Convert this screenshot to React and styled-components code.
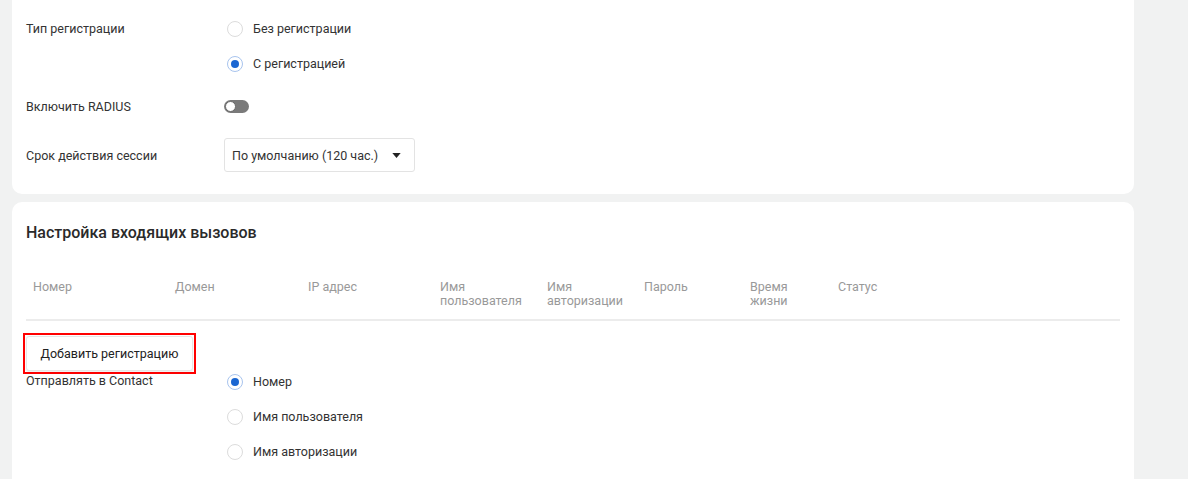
import React, { useState } from "react";
import styled, { createGlobalStyle } from "styled-components";

const GlobalStyle = createGlobalStyle`
  html, body {
    margin: 0;
    padding: 0;
    background: #f1f2f2;
    font-family: Roboto, "Noto Sans", Arial, sans-serif;
    color: #333;
    overflow: hidden;
  }
`;

const columns = [
  { title: "Номер", width: 142 },
  { title: "Домен", width: 133 },
  { title: "IP адрес", width: 132 },
  { title: ["Имя", "пользователя"], width: 107 },
  { title: ["Имя", "авторизации"], width: 97 },
  { title: "Пароль", width: 106 },
  { title: ["Время", "жизни"], width: 88 },
  { title: "Статус", width: null },
];

function Radio({ checked, label, onClick }) {
  return (
    <RadioItem onClick={onClick}>
      <RadioCircle $checked={checked} />
      <span>{label}</span>
    </RadioItem>
  );
}

function App() {
  const [regType, setRegType] = useState("with");
  const [contact, setContact] = useState("number");
  const [radius, setRadius] = useState(false);

  return (
    <Page>
      <GlobalStyle />
      <TopCard>
        <FieldRow>
          <Label $lh={35}>Тип регистрации</Label>
          <RadioGroup>
            <Radio
              label="Без регистрации"
              checked={regType === "without"}
              onClick={() => setRegType("without")}
            />
            <Radio
              label="С регистрацией"
              checked={regType === "with"}
              onClick={() => setRegType("with")}
            />
          </RadioGroup>
        </FieldRow>
        <FieldRow $center $mt={8} $h={35}>
          <Label>Включить RADIUS</Label>
          <Toggle $on={radius} onClick={() => setRadius(!radius)}>
            <Thumb $on={radius} />
          </Toggle>
        </FieldRow>
        <FieldRow $center $mt={14} $h={34}>
          <Label>Срок действия сессии</Label>
          <Select>
            <span>По умолчанию (120 час.)</span>
            <svg width="9" height="5" viewBox="0 0 10 6">
              <path d="M0 0 L10 0 L5 6 Z" fill="#222" />
            </svg>
          </Select>
        </FieldRow>
      </TopCard>

      <Card>
        <Title>Настройка входящих вызовов</Title>
        <Table>
          <HeaderRow>
            {columns.map((c, i) => (
              <HeaderCell key={i} $w={c.width}>
                {Array.isArray(c.title) ? (
                  <>
                    {c.title[0]}
                    <br />
                    {c.title[1]}
                  </>
                ) : (
                  c.title
                )}
              </HeaderCell>
            ))}
          </HeaderRow>
        </Table>

        <FieldRow>
          <LabelColumn>
            <Highlight>
              <Button>Добавить регистрацию</Button>
            </Highlight>
            <Label $lh={14}>Отправлять в Contact</Label>
          </LabelColumn>
          <RadioGroup $pt={43}>
            <Radio
              label="Номер"
              checked={contact === "number"}
              onClick={() => setContact("number")}
            />
            <Radio
              label="Имя пользователя"
              checked={contact === "user"}
              onClick={() => setContact("user")}
            />
            <Radio
              label="Имя авторизации"
              checked={contact === "auth"}
              onClick={() => setContact("auth")}
            />
          </RadioGroup>
        </FieldRow>
      </Card>
    </Page>
  );
}

const Page = styled.div`
  width: 1122px;
  padding-left: 12px;
  display: flex;
  flex-direction: column;
  gap: 8px;
`;

const Card = styled.div`
  background: #fff;
  border-radius: 10px;
  padding: 20px 14px 60px;
`;

const TopCard = styled(Card)`
  border-radius: 0 0 10px 10px;
  padding: 11px 14px 22px;
`;

const FieldRow = styled.div`
  display: flex;
  align-items: ${(p) => (p.$center ? "center" : "flex-start")};
  margin-top: ${(p) => p.$mt || 0}px;
  height: ${(p) => (p.$h ? `${p.$h}px` : "auto")};
`;

const LabelColumn = styled.div`
  width: 198px;
  flex-shrink: 0;
  display: flex;
  flex-direction: column;
  align-items: flex-start;
`;

const Label = styled.div`
  width: 198px;
  flex-shrink: 0;
  font-size: 12.5px;
  color: #333;
  line-height: ${(p) => (p.$lh ? `${p.$lh}px` : "normal")};
`;

const RadioGroup = styled.div`
  display: flex;
  flex-direction: column;
  padding-top: ${(p) => p.$pt || 0}px;
`;

const RadioItem = styled.label`
  display: flex;
  align-items: center;
  gap: 10px;
  height: 35px;
  padding-left: 3px;
  font-size: 12.5px;
  color: #333;
  cursor: pointer;
`;

const RadioCircle = styled.span`
  box-sizing: border-box;
  width: 16px;
  height: 16px;
  border-radius: 50%;
  border: 1px solid ${(p) => (p.$checked ? "#a8c4ee" : "#dcdcdc")};
  background: #fff;
  display: flex;
  align-items: center;
  justify-content: center;
  &::after {
    content: "";
    width: 8px;
    height: 8px;
    border-radius: 50%;
    background: #1a66d2;
    display: ${(p) => (p.$checked ? "block" : "none")};
  }
`;

const Toggle = styled.div`
  position: relative;
  width: 25px;
  height: 13px;
  border-radius: 7px;
  background: ${(p) => (p.$on ? "#1a66d2" : "#7a7a7a")};
  cursor: pointer;
`;

const Thumb = styled.div`
  position: absolute;
  top: 1px;
  left: ${(p) => (p.$on ? "13px" : "1px")};
  width: 11px;
  height: 11px;
  box-sizing: border-box;
  border-radius: 50%;
  background: #fff;
  border: 1px solid #6a6a6a;
`;

const Select = styled.div`
  box-sizing: border-box;
  width: 191px;
  height: 34px;
  border: 1px solid #e3e3e3;
  border-radius: 3px;
  display: flex;
  align-items: center;
  justify-content: space-between;
  padding: 0 13px 0 7px;
  font-size: 12.5px;
  color: #333;
  cursor: pointer;
`;

const Title = styled.h3`
  margin: 0;
  font-size: 16px;
  font-weight: 500;
  line-height: 22px;
  color: #2a2a2a;
`;

const Table = styled.div`
  margin-top: 25px;
  border-bottom: 2px solid #ececec;
`;

const HeaderRow = styled.div`
  display: flex;
`;

const HeaderCell = styled.div`
  box-sizing: border-box;
  width: ${(p) => (p.$w ? `${p.$w}px` : "auto")};
  flex: ${(p) => (p.$w ? "none" : "1")};
  padding: 11px 7px 11px;
  font-size: 12.5px;
  font-weight: 400;
  line-height: 14px;
  color: #999;
`;

const Highlight = styled.div`
  margin-top: 12px;
  margin-left: -3px;
  border: 2px solid #f00;
  padding: 1px;
`;

const Button = styled.button`
  box-sizing: border-box;
  width: 167px;
  height: 35px;
  background: #fff;
  border: 1px solid #e6e6e6;
  border-radius: 3px;
  box-shadow: 0 1px 2px rgba(0, 0, 0, 0.08);
  font-family: inherit;
  font-size: 12.5px;
  font-weight: 400;
  color: #222;
  cursor: pointer;
  display: block;
`;

export default App;
